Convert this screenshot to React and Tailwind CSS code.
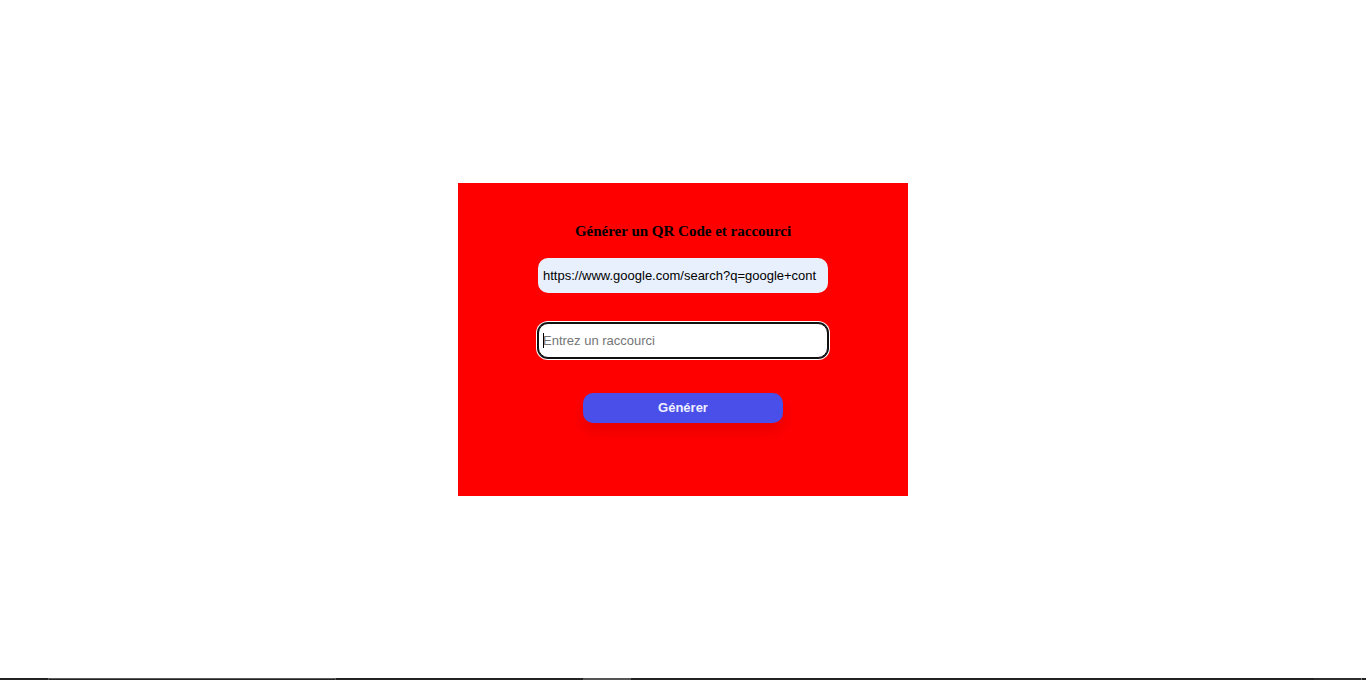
export default function App() {
  const field =
    "h-[35px] w-full rounded-[10px] font-['Liberation_Sans',Arial,sans-serif] text-[13px] text-black outline-none";
  return (
    <div className="flex min-h-screen flex-col bg-white">
      <main className="flex flex-1 items-center justify-center">
        <form
          className="flex w-full max-w-[450px] flex-col items-center bg-[#ff0000] px-20 pt-[39px] pb-[73px]"
          onSubmit={(e) => e.preventDefault()}
        >
          <h1 className="mb-[18px] font-['Liberation_Serif','Times_New_Roman',serif] text-[15px] leading-[18px] font-bold text-black">
            Générer un QR Code et raccourci
          </h1>
          <input
            type="text"
            aria-label="URL"
            defaultValue="https://www.google.com/search?q=google+cont"
            className={`${field} bg-[#e8f0fe] px-[5px]`}
          />
          <div className="relative mt-[30px] flex w-full">
            <input
              type="text"
              aria-label="Raccourci"
              placeholder="Entrez un raccourci"
              autoFocus
              className={`${field} peer border border-transparent bg-white px-1 placeholder:text-[#757575] placeholder-shown:caret-transparent focus:border-[#101010] focus:shadow-[0_0_0_1px_#101010,0_0_0_2px_#ffffff]`}
            />
            <span
              aria-hidden="true"
              className="pointer-events-none absolute top-[10px] left-[5px] hidden h-[15px] w-px bg-black peer-placeholder-shown:peer-focus:block"
            />
          </div>
          <button
            type="submit"
            className="mt-[35px] h-[30px] w-[200px] rounded-[10px] bg-[#4a4fe9] font-['Liberation_Sans',Arial,sans-serif] text-[13px] font-bold text-[#f0f0ff] shadow-[0_8px_15px_rgba(0,0,0,0.1)]"
          >
            Générer
          </button>
        </form>
      </main>
      <footer className="flex h-[2px] bg-[#232325]">
        <div className="ml-12 w-72 border border-b-0 border-[#5a5a5a]" />
        <div className="ml-[247px] w-12 bg-[#555555]" />
        <div className="ml-auto mr-1 w-12 border-r border-[#777777] bg-[#2e2e30]" />
      </footer>
    </div>
  );
}
